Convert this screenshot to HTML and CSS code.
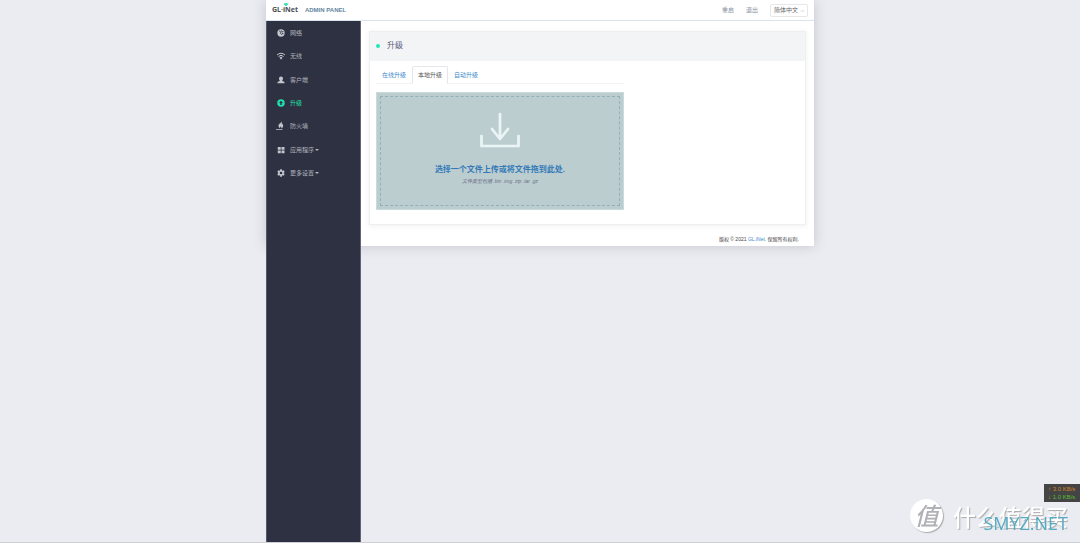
FILE: index.html
```html
<!DOCTYPE html>
<html lang="zh-CN">
<head>
<meta charset="utf-8">
<meta name="viewport" content="width=device-width, initial-scale=1">
<title>GL-iNet Admin Panel</title>
<link rel="stylesheet" href="styles.css">
</head>
<body>
<div class="shell">
  <div class="backdrop"></div>
  <header class="topbar">
    <a class="brand" href="#">
      <span class="logo">GL·iNet
        <svg class="logo-wave" viewBox="0 0 8 6"><path d="M0 1Q4-1 8 1L5 4Q4 5 3 4Z" fill="#35e0b0"/></svg>
      </span>
      <span class="panel-name">ADMIN PANEL</span>
    </a>
    <nav class="actions">
      <a href="#">重启</a>
      <a href="#">退出</a>
      <span class="language">
        <select aria-label="语言"><option>简体中文</option></select>
        <svg class="chevron" viewBox="0 0 6 4"><path d="M1 1l2 2 2-2" fill="none" stroke="#b5b9c0" stroke-width=".7"/></svg>
      </span>
    </nav>
  </header>

  <nav class="sidebar">
    <div class="menu">
    <a class="item" href="#"><svg viewBox="0 0 16 16"><circle cx="8" cy="8" r="7.300" fill="#c3c6ce"/><path d="M4 4l3 1 1 3-2 1M9 3l1 3 3-1M13 9l-3 0-1 3" fill="none" stroke="#2e3141" stroke-width="1.500"/></svg><span>网络</span></a>
    <a class="item" href="#"><svg viewBox="0 0 16 16"><g fill="none" stroke="#c3c6ce" stroke-width="2"><path d="M0 6Q8-1 16 6M3 9Q8 4 13 9M5.500 11.500Q8 9 10.500 11.500"/></g><circle cx="8" cy="13" r="1.700" fill="#c3c6ce"/></svg><span>无线</span></a>
    <a class="item" href="#"><svg viewBox="0 0 16 16"><path d="M8 1c5 0 4.500 6 2.500 8v1l4.500 2v2.500H1V12l4.500-2V9C3.500 7 3 1 8 1z" fill="#c3c6ce"/></svg><span>客户端</span></a>
    <a class="item active" href="#" aria-current="page"><svg viewBox="0 0 16 16"><circle cx="8" cy="8" r="7.500" fill="#1fe0ac"/><path d="M8 3.500l4 4.500H9.500v4h-3V8H4z" fill="#2e3141"/></svg><span>升级</span></a>
    <a class="item" href="#"><svg viewBox="0 0 16 16"><path d="M9-2c1 4-6 5-6 9.500 0 2 1 3.500 3 5 0-2 1-3 2-4 1 1.500 1 3 0 4.500 6-2 5-7 2-10l-.500 2c0-2 .500-5-.500-7zM-2 14.500h13V16H-2z" fill="#c3c6ce"/></svg><span>防火墙</span></a>
    <a class="item" href="#"><svg viewBox="0 0 16 16"><path d="M1.500 2h6v5.300h-6zM9 2h6v5.300H9zM1.500 9h6v5.300h-6zM9 9h6v5.300H9z" fill="#c3c6ce"/></svg><span>应用程序</span><i class="caret"></i></a>
    <a class="item" href="#"><svg viewBox="0 0 16 16"><g stroke="#c3c6ce" stroke-width="3.600"><path d="M8 .5v15M1.500 4.250l13 7.500M1.500 11.750l13-7.500"/></g><circle cx="8" cy="8" r="5.500" fill="#c3c6ce"/><circle cx="8" cy="8" r="2.500" fill="#2e3141"/></svg><span>更多设置</span><i class="caret"></i></a>
    </div>
  </nav>

  <main class="main">
    <section class="card">
      <h1 class="card-title"><i class="dot"></i>升级</h1>
      <div class="card-body">
        <div class="tabs" role="tablist">
          <button class="tab" type="button" role="tab">在线升级</button>
          <button class="tab selected" type="button" role="tab" aria-selected="true">本地升级</button>
          <button class="tab" type="button" role="tab">自动升级</button>
        </div>
        <label class="dropzone">
          <input class="file" type="file" accept=".bin,.img,.zip,.tar,.gz">
          <span class="drop-inner">
            <svg class="download" viewBox="0 0 40 36" fill="none" stroke="#eaf6f6" stroke-width="2.700" stroke-linecap="round" stroke-linejoin="round"><path d="M20 2v25M12 17l8 10 8-10"/><path d="M1.500 23v11h37V23" stroke-linecap="butt" stroke-linejoin="miter"/></svg>
            <span class="drop-title">选择一个文件上传或将文件拖到此处.</span>
            <span class="drop-types">文件类型包括 .bin .img .zip .tar .gz</span>
          </span>
        </label>
      </div>
    </section>
    <footer class="footer">版权 © 2021 <a href="#">GL.iNet.</a> 保留所有权利.</footer>
  </main>
</div>

<aside class="speed">
  <span class="up">↑ 3.0 KB/s</span>
  <span class="down">↓ 1.0 KB/s</span>
</aside>
<div class="watermark">
  <span class="seal">值</span>
  <span class="wordmark">什么值得买</span>
  <span class="site">SMYZ.NET</span>
</div>
</body>
</html>
```
FILE: styles.css
```css
* { box-sizing: border-box; }

body {
  margin: 0;
  border-bottom: 1px solid #cfd0d5;
  background: #ebecf1;
  color: #555b66;
  font: 6px/8px "Liberation Sans", "Noto Sans CJK SC", sans-serif;
}

a { color: #428bca; text-decoration: none; }

.shell {
  display: grid;
  grid-template-columns: 95px 1fr;
  grid-template-rows: auto auto 1fr;
  width: 100%;
  max-width: 548px;
  min-height: calc(100vh - 1px);
  margin: 0 auto;
}

.backdrop {
  grid-area: 1 / 1 / 3 / 3;
  background: #fff;
  box-shadow: 0 0 12px rgba(60, 65, 80, .22);
}

.topbar {
  grid-area: 1 / 1 / 2 / 3;
  display: flex;
  align-items: center;
  justify-content: space-between;
  height: 21px;
  padding: 0 6px;
  border-bottom: 1px solid #dae4ec;
}

.brand { display: flex; align-items: center; gap: 7px; }

.logo {
  position: relative;
  color: #4b4e55;
  font: bold 7px/10px "Noto Sans", sans-serif;
}

.logo-wave {
  position: absolute;
  top: -2px;
  left: 11px;
  width: 6px;
  height: 4px;
}

.panel-name { color: #6486a2; font-weight: bold; }

.actions { display: flex; align-items: center; gap: 12px; }
.actions a { color: #87909b; }

.language { position: relative; display: flex; }

.language select {
  appearance: none;
  width: 38px;
  height: 13px;
  padding: 0 3px;
  border: 1px solid #e5e7ea;
  border-radius: 2px;
  background: #fff;
  color: #666;
  font: inherit;
}

.chevron {
  position: absolute;
  top: 5px;
  right: 3px;
  width: 5px;
  height: 4px;
  pointer-events: none;
}

.sidebar {
  grid-area: 2 / 1 / 4 / 2;
  padding: 6px 10px;
  border-left: 1px solid #535767;
  border-right: 1px solid #606474;
  background: #2e3141;
}

.menu {
  display: flex;
  flex-direction: column;
  justify-content: space-between;
  min-height: 152px;
}

.item {
  display: flex;
  align-items: center;
  height: 12px;
  color: #b0b4be;
}

.item svg { width: 8px; height: 8px; margin-right: 5px; overflow: visible; }
.item.active { color: #1fe0ac; }

.caret {
  margin-left: 1px;
  border: 2px solid transparent;
  border-top-color: currentColor;
  border-bottom: 0;
}

.main { grid-area: 2 / 2 / 3 / 3; padding: 10px 8px 3px; }

.card {
  border: 1px solid #eeeff1;
  background: #fff;
  box-shadow: 0 1px 5px rgba(50, 60, 80, .08);
}

.card-title {
  display: flex;
  align-items: center;
  gap: 7px;
  height: 29px;
  margin: 0;
  padding: 0 6px 2px;
  background: #f3f4f6;
  color: #5a607c;
  font-size: 8px;
  font-weight: normal;
}

.dot { width: 4px; height: 4px; border-radius: 50%; background: #1fe8b4; }

.card-body { padding: 5px 6px 14px; }

.tabs {
  display: flex;
  max-width: 248px;
  border-bottom: 1px solid #f1f2f4;
}

.tab {
  height: 18px;
  margin-bottom: -1px;
  padding: 0 5px;
  border: 1px solid transparent;
  background: none;
  color: #428bca;
  font: inherit;
}

.selected {
  border-color: #e4e6e9;
  border-bottom-color: #fff;
  border-radius: 2px 2px 0 0;
  background: #fff;
  color: #555;
}

.dropzone {
  display: block;
  max-width: 248px;
  margin-top: 8px;
  padding: 3px;
  border: 1px solid #c9dcdd;
  background: #bccdd0;
  cursor: pointer;
}

.file {
  position: absolute;
  width: 1px;
  height: 1px;
  opacity: 0;
}

.drop-inner {
  display: flex;
  flex-direction: column;
  align-items: center;
  min-height: 110px;
  padding-top: 15px;
  border: 1px dashed #92b0b5;
}

.download { width: 40px; height: 36px; }

.drop-title {
  margin-top: 16px;
  color: #337ab7;
  font-size: 8px;
  font-weight: bold;
  line-height: 12px;
}

.drop-types {
  margin-top: 1px;
  color: #696d85;
  font-size: 5px;
  font-style: italic;
}

.footer {
  margin-top: 10px;
  padding-right: 7px;
  color: #444;
  font-size: 5px;
  text-align: right;
}

.speed {
  position: fixed;
  right: 0;
  bottom: 41px;
  display: flex;
  flex-direction: column;
  width: 36px;
  padding: 1px 4px;
  background: #444;
}

.up { color: #cf832c; }
.down { color: #58bc30; }

.watermark {
  position: fixed;
  right: 12px;
  bottom: 11px;
  display: flex;
  align-items: center;
  gap: 10px;
  color: #fff;
  font-family: "Noto Sans CJK SC", sans-serif;
}

.seal {
  width: 33px;
  height: 33px;
  border-radius: 50%;
  background: #fff;
  box-shadow: 1px 1px 1px #aaa;
  color: #b0b1b5;
  font-size: 24px;
  font-weight: 500;
  font-style: italic;
  line-height: 32px;
  text-align: center;
}

.wordmark {
  font-size: 23px;
  font-weight: 500;
  line-height: 32px;
  text-shadow: 1px 1px 1px #aaa;
}

.site {
  position: absolute;
  right: 0;
  bottom: -1px;
  color: #55abc2;
  font: 18px/20px "Open Sans", sans-serif;
}
```
